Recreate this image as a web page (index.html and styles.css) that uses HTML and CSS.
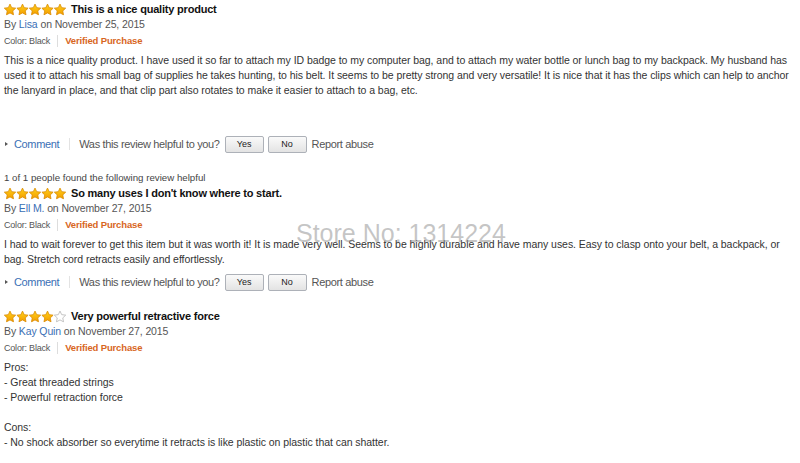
FILE: index.html
```html
<!DOCTYPE html>
<html>
<head>
<meta charset="utf-8">
<link rel="stylesheet" href="styles.css">
</head>
<body>
<svg class="defs" width="0" height="0">
  <defs>
    <linearGradient id="gold" x1="0" y1="0" x2="0" y2="1">
      <stop offset="0" stop-color="#ffd21a"/>
      <stop offset="1" stop-color="#f39c00"/>
    </linearGradient>
    <symbol id="star" viewBox="0 0 12 12">
      <path d="M6 0.6 L7.7 4.15 L11.7 4.65 L8.76 7.4 L9.53 11.35 L6 9.4 L2.47 11.35 L3.24 7.4 L0.3 4.65 L4.3 4.15 Z" fill="url(#gold)" stroke="#d98a00" stroke-width="0.8" stroke-linejoin="round"/>
    </symbol>
    <symbol id="star-empty" viewBox="0 0 12 12">
      <path d="M6 0.6 L7.7 4.15 L11.7 4.65 L8.76 7.4 L9.53 11.35 L6 9.4 L2.47 11.35 L3.24 7.4 L0.3 4.65 L4.3 4.15 Z" fill="#fff" stroke="#b5b5b5" stroke-width="0.8" stroke-linejoin="round"/>
    </symbol>
  </defs>
</svg>

<div class="page">
  <div class="review">
    <div class="head">
      <svg class="stars" width="63" height="13" viewBox="0 0 63 13">
        <use href="#star" x="0" y="0.5" width="12" height="12"/>
        <use href="#star" x="12.5" y="0.5" width="12" height="12"/>
        <use href="#star" x="25" y="0.5" width="12" height="12"/>
        <use href="#star" x="37.5" y="0.5" width="12" height="12"/>
        <use href="#star" x="50" y="0.5" width="12" height="12"/>
      </svg>
      <span class="title">This is a nice quality product</span>
    </div>
    <div class="byline">By <a class="link">Lisa</a> on November 25, 2015</div>
    <div class="meta"><span class="color">Color: Black</span><span class="verified">Verified Purchase</span></div>
    <p class="text spaced">This is a nice quality product. I have used it so far to attach my ID badge to my computer bag, and to attach my water bottle or lunch bag to my backpack. My husband has used it to attach his small bag of supplies he takes hunting, to his belt. It seems to be pretty strong and very versatile! It is nice that it has the clips which can help to anchor the lanyard in place, and that clip part also rotates to make it easier to attach to a bag, etc.</p>
    <div class="actions">
      <span class="caret"></span><a class="link comment">Comment</a>
      <span class="question">Was this review helpful to you?</span>
      <button class="btn">Yes</button><button class="btn">No</button>
      <span class="report">Report abuse</span>
    </div>
  </div>

  <div class="review">
    <div class="helpful">1 of 1 people found the following review helpful</div>
    <div class="head">
      <svg class="stars" width="63" height="13" viewBox="0 0 63 13">
        <use href="#star" x="0" y="0.5" width="12" height="12"/>
        <use href="#star" x="12.5" y="0.5" width="12" height="12"/>
        <use href="#star" x="25" y="0.5" width="12" height="12"/>
        <use href="#star" x="37.5" y="0.5" width="12" height="12"/>
        <use href="#star" x="50" y="0.5" width="12" height="12"/>
      </svg>
      <span class="title">So many uses I don't know where to start.</span>
    </div>
    <div class="byline">By <a class="link">Ell M.</a> on November 27, 2015</div>
    <div class="meta"><span class="color">Color: Black</span><span class="verified">Verified Purchase</span></div>
    <p class="text">I had to wait forever to get this item but it was worth it! It is made very well. Seems to be highly durable and have many uses. Easy to clasp onto your belt, a backpack, or bag. Stretch cord retracts easily and effortlessly.</p>
    <div class="actions">
      <span class="caret"></span><a class="link comment">Comment</a>
      <span class="question">Was this review helpful to you?</span>
      <button class="btn">Yes</button><button class="btn">No</button>
      <span class="report">Report abuse</span>
    </div>
  </div>

  <div class="review">
    <div class="head">
      <svg class="stars" width="63" height="13" viewBox="0 0 63 13">
        <use href="#star" x="0" y="0.5" width="12" height="12"/>
        <use href="#star" x="12.5" y="0.5" width="12" height="12"/>
        <use href="#star" x="25" y="0.5" width="12" height="12"/>
        <use href="#star" x="37.5" y="0.5" width="12" height="12"/>
        <use href="#star-empty" x="50" y="0.5" width="12" height="12"/>
      </svg>
      <span class="title">Very powerful retractive force</span>
    </div>
    <div class="byline">By <a class="link">Kay Quin</a> on November 27, 2015</div>
    <div class="meta"><span class="color">Color: Black</span><span class="verified">Verified Purchase</span></div>
    <p class="text">Pros:<br>- Great threaded strings<br>- Powerful retraction force<br><br>Cons:<br>- No shock absorber so everytime it retracts is like plastic on plastic that can shatter.</p>
  </div>

  <div class="watermark">Store No: 1314224</div>
</div>
</body>
</html>
```

FILE: styles.css
```css
html, body {
  margin: 0;
  padding: 0;
  background: #fff;
}

.defs {
  position: absolute;
  width: 0;
  height: 0;
}

.page {
  position: relative;
  width: 800px;
  height: 463px;
  overflow: hidden;
  padding: 2px 0 0 4px;
  box-sizing: border-box;
  font-family: "Liberation Sans", Arial, sans-serif;
  color: #333;
}

.review + .review {
  margin-top: 18px;
}

.head {
  display: flex;
  align-items: center;
  height: 14px;
}

.stars {
  display: block;
  flex: none;
}

.title {
  margin-left: 4px;
  font-weight: bold;
  font-size: 11px;
  letter-spacing: -0.2px;
  color: #111;
  white-space: nowrap;
}

.byline {
  margin-top: 1px;
  line-height: 14px;
  font-size: 10.5px;
  letter-spacing: -0.12px;
  color: #555;
}

.link {
  color: #3a6fb5;
}

.meta {
  margin-top: 3px;
  line-height: 14px;
  display: flex;
  align-items: center;
}

.color {
  font-size: 9px;
  letter-spacing: -0.2px;
  color: #555;
  padding-right: 7px;
  border-right: 1px solid #ddd;
  line-height: 12px;
}

.verified {
  margin-left: 7px;
  font-size: 9.5px;
  letter-spacing: -0.15px;
  font-weight: bold;
  color: #d8661e;
}

.text {
  margin: 5px 0 0;
  font-size: 10.5px;
  letter-spacing: -0.05px;
  line-height: 15px;
  color: #333;
  width: 792px;
}

.text.spaced {
  padding-bottom: 31px;
}

.actions {
  margin-top: 6px;
  height: 18px;
  display: flex;
  align-items: center;
  font-size: 11px;
  letter-spacing: -0.35px;
  color: #555;
}

.caret {
  width: 0;
  height: 0;
  border-left: 3px solid #555;
  border-top: 2.5px solid transparent;
  border-bottom: 2.5px solid transparent;
  margin: 0 6px 0 1px;
}

.comment {
  padding-right: 10px;
  border-right: 1px solid #e3e3e3;
  line-height: 12px;
}

.question {
  margin-left: 9px;
  margin-right: 5px;
}

.btn {
  width: 39px;
  height: 17px;
  margin: 0 4px 0 0;
  padding: 0;
  border: 1px solid #adb1b8;
  border-radius: 2px;
  background: linear-gradient(#fafafa, #e3e3e3);
  font-family: "Liberation Sans", Arial, sans-serif;
  font-size: 9px;
  color: #222;
}

.report {
  margin-left: 1px;
}

.helpful {
  line-height: 14px;
  margin-bottom: 1px;
  font-size: 9.7px;
  color: #444;
}

.watermark {
  position: absolute;
  left: 296px;
  top: 219px;
  font-family: "Liberation Sans", Arial, sans-serif;
  font-size: 25px;
  color: rgba(140, 140, 140, 0.5);
  white-space: nowrap;
}
```
